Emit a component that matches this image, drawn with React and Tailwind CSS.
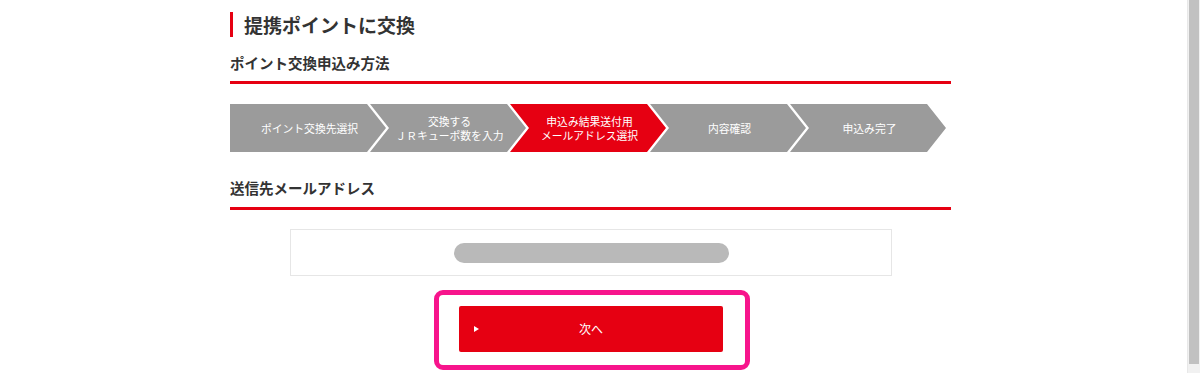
import React from "react";

const font = { fontFamily: '"Noto Sans CJK JP", "Noto Sans", sans-serif' };

const steps = [
  { lines: ["ポイント交換先選択"], first: true },
  { lines: ["交換する", "ＪＲキューポ数を入力"] },
  { lines: ["申込み結果送付用", "メールアドレス選択"], active: true },
  { lines: ["内容確認"] },
  { lines: ["申込み完了"] },
];

function Step({ step }) {
  const clip = step.first
    ? "[clip-path:polygon(0_0,calc(100%_-_19px)_0,100%_50%,calc(100%_-_19px)_100%,0_100%)]"
    : "[clip-path:polygon(0_0,calc(100%_-_19px)_0,100%_50%,calc(100%_-_19px)_100%,0_100%,19px_50%)]";
  return (
    <div
      className={
        (step.first ? "" : "-ml-[16px] ") +
        (step.active ? "bg-[#e60012] " : "bg-[#9b9b9b] ") +
        clip +
        " w-[156px] h-[48px] shrink-0 flex flex-col items-center justify-center text-white text-[10.8px] leading-[14px] pl-[3px]"
      }
    >
      {step.lines.map((l, i) => (
        <span key={i} className="block">{l}</span>
      ))}
    </div>
  );
}

export default function App() {
  return (
    <div className="flex w-[1200px] h-[373px] overflow-hidden bg-white" style={font}>
      <div className="flex-1">
        <div className="ml-[230px] w-[721px]">
          <div className="pt-[12px] flex items-center">
            <div className="w-[3px] h-[25px] bg-[#e60012]" />
            <h1 className="ml-[11px] text-[19px] leading-[25px] font-bold text-[#333]">提携ポイントに交換</h1>
          </div>
          <h2 className="mt-[16px] text-[14.5px] leading-[20px] font-bold text-[#333]">ポイント交換申込み方法</h2>
          <div className="mt-[8px] h-[3px] bg-[#e60012]" />
          <div className="mt-[20px] flex">
            {steps.map((s, i) => (
              <Step key={i} step={s} />
            ))}
          </div>
          <h2 className="mt-[26px] text-[14.5px] leading-[20px] font-bold text-[#333]">送信先メールアドレス</h2>
          <div className="mt-[9px] h-[3px] bg-[#e60012]" />
          <div className="mt-[19px] ml-[60px] w-[602px] h-[47px] border border-[#e6e6e6] flex items-center justify-center">
            <div className="w-[275px] h-[20px] rounded-full bg-[#b9b9b9]" />
          </div>
          <div className="mt-[14px] ml-[204px] w-[316px] h-[80px] border-[5px] border-[#f7148c] rounded-[9px] pt-[11px] pl-[20px]">
            <button className="relative w-[264px] h-[46px] bg-[#e60012] rounded-[2px] text-white text-[12px] flex items-center justify-center">
              <span className="absolute left-[15px] top-1/2 -translate-y-1/2 w-0 h-0 border-y-[3px] border-y-transparent border-l-[5px] border-l-white" />
              次へ
            </button>
          </div>
        </div>
      </div>
      <div className="w-[13px] h-full border-l border-[#e8e8e8] bg-[#f1f1f1] flex flex-col">
        <div className="mx-[1px] h-[364px] bg-[#c1c1c1]" />
      </div>
    </div>
  );
}
